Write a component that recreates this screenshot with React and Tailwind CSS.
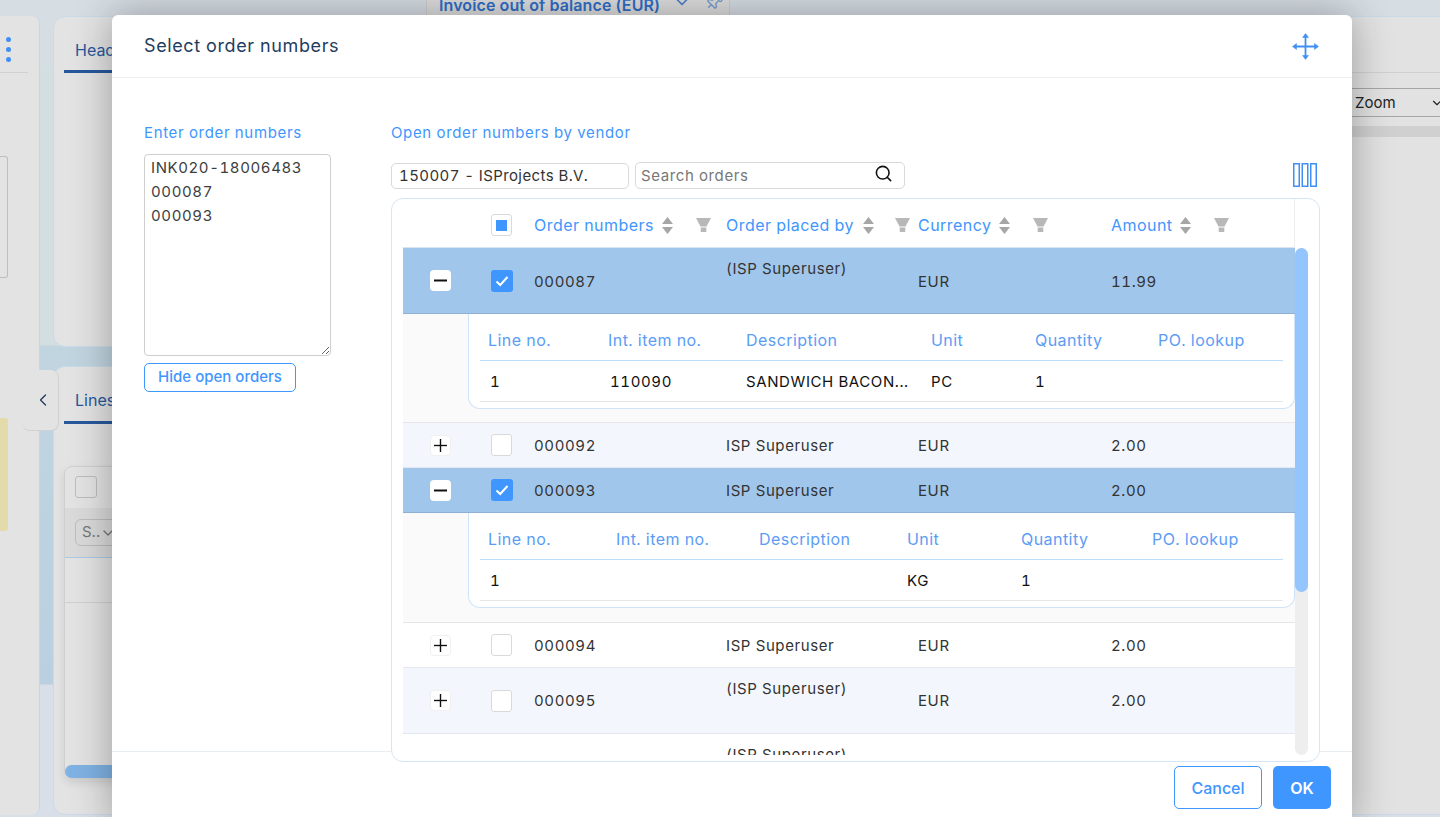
import { Search, ChevronDown, ChevronLeft, Pin } from "lucide-react";

const BLUE = "text-[#3f96fe]";

function Checkbox({ state }) {
    if (state === "checked") {
        return (
            <div className="w-[22px] h-[22px] rounded-[3px] bg-[#3f96fe] flex items-center justify-center">
                <svg width="14" height="12" viewBox="0 0 14 12" fill="none" stroke="white" strokeWidth="2">
                    <path d="M1.5 6.5 L5.2 10 L12.5 2" />
                </svg>
            </div>
        );
    }
    if (state === "partial") {
        return (
            <div className="w-[21px] h-[22px] rounded-[3px] bg-white border border-[#d9d9d9] flex items-center justify-center">
                <div className="w-[11px] h-[11px] bg-[#3f96fe]" />
            </div>
        );
    }
    return <div className="w-[21px] h-[22px] rounded-[3px] bg-white border border-[#d9d9d9]" />;
}

function ExpandButton({ open }) {
    return (
        <div className={`w-[21px] h-[21px] rounded-[4px] bg-white flex items-center justify-center ${open ? "" : "border border-[#f0f0f0]"}`}>
            <svg width="13" height="13" viewBox="0 0 13 13" stroke="#111" fill="none" strokeWidth={open ? 2 : 1.4}>
                <path d="M0 6.5 H13" />
                {!open && <path d="M6.5 0 V13" />}
            </svg>
        </div>
    );
}

function SortIcon() {
    return (
        <svg width="11" height="17" viewBox="0 0 11 17" fill="#a6a6a6" className="shrink-0">
            <path d="M5.5 0 L11 7 H0 Z" />
            <path d="M0 10 H11 L5.5 17 Z" />
        </svg>
    );
}

function FilterIcon() {
    return (
        <svg width="15" height="14" viewBox="0 0 15 14" fill="#b8b8b8" className="shrink-0">
            <path d="M0 0 H15 L10.5 8.5 H4.5 Z" />
            <rect x="4.7" y="9.5" width="5.6" height="4.5" />
        </svg>
    );
}

function HeaderCell({ label, width, sortGap = "ml-[8px]", gap }) {
    return (
        <div className={`flex items-center ${width}`}>
            <span className={`${BLUE} text-[16px] tracking-[0.45px] whitespace-nowrap`}>{label}</span>
            <span className={sortGap}><SortIcon /></span>
            <span className={gap}><FilterIcon /></span>
        </div>
    );
}

function OrderRow({ number, by, amount, height, bg, border, open, checked, topAligned, textPad = "pt-[2px]" }) {
    return (
        <div className={`flex items-center shrink-0 border-b ${height} ${bg} ${border}`}>
            <div className="w-[88px] pl-[27px]"><ExpandButton open={open} /></div>
            <div className="w-[43px]"><Checkbox state={checked ? "checked" : "none"} /></div>
            <div className={`w-[192px] text-[#333] ${textPad}`}>{number}</div>
            <div className={`w-[192px] text-[#333] ${topAligned ? "self-start pt-[10px]" : textPad}`}>{by}</div>
            <div className={`w-[193px] text-[#333] ${textPad}`}>EUR</div>
            <div className={`text-[#333] ${textPad}`}>{amount}</div>
        </div>
    );
}

function LineDetail({ height, widths, values }) {
    const labels = ["Line no.", "Int. item no.", "Description", "Unit", "Quantity", "PO. lookup"];
    return (
        <div className={`${height} shrink-0 bg-[#fafafa] border-b border-[#e6e6e6] pl-[65px]`}>
            <div className="h-[95px] bg-white border border-t-0 border-[#cfe4fa] rounded-b-xl px-[11px]">
                <div className="flex items-center h-[47px] pt-[5px] border-b border-[#bcdcfb]">
                    {labels.map((label, i) => (
                        <div key={label} className={`${widths[i]} pl-2 text-[16px] tracking-[0.45px] text-[#5c9cf5] whitespace-nowrap`}>{label}</div>
                    ))}
                </div>
                <div className="flex items-center h-[41px] pt-[3px] border-b border-[#e6e6e6]">
                    {values.map((value, i) => (
                        <div key={i} className={`${widths[i]} ${i < 2 ? "pl-[10px]" : "pl-2"} text-[#111] whitespace-nowrap`}>{value}</div>
                    ))}
                </div>
            </div>
        </div>
    );
}

function OrdersTable() {
    return (
        <div className="relative z-10 mt-[9px] h-[564px] w-[929px] bg-white border border-[#d5e6f6] rounded-xl pl-[11px] pr-[11px] pb-[6px] flex flex-col">
            <div className="flex items-center h-[49px] pt-[4px] shrink-0 w-[892px] border-b border-r border-b-[#d8e6f3] border-r-[#eeeeee]">
                <div className="w-[88px]" />
                <div className="w-[43px]"><Checkbox state="partial" /></div>
                <HeaderCell label="Order numbers" width="w-[192px]" gap="ml-[23px]" />
                <HeaderCell label="Order placed by" width="w-[192px]" sortGap="ml-[9px]" gap="ml-[21px]" />
                <HeaderCell label="Currency" width="w-[193px]" gap="ml-[23px]" />
                <HeaderCell label="Amount" width="" sortGap="ml-[7px]" gap="ml-[23px]" />
            </div>
            <div className="flex flex-1 min-h-0">
                <div className="w-[892px] overflow-hidden flex flex-col">
                    <OrderRow number="000087" by="(ISP Superuser)" amount="11.99" height="h-[66px]" bg="bg-[#a1c6eb]" border="border-[#8fb0d2]" open checked topAligned textPad="pt-[4px]" />
                    <LineDetail
                        height="h-[109px]"
                        widths={["w-[120px]", "w-[138px]", "w-[185px]", "w-[104px]", "w-[123px]", "w-[110px]"]}
                        values={["1", "110090", "SANDWICH BACON...", "PC", "1", ""]}
                    />
                    <OrderRow number="000092" by="ISP Superuser" amount="2.00" height="h-[45px]" bg="bg-[#f3f7fd]" border="border-[#e3e8ee]" />
                    <OrderRow number="000093" by="ISP Superuser" amount="2.00" height="h-[45px]" bg="bg-[#a1c6eb]" border="border-[#8fb0d2]" open checked />
                    <LineDetail
                        height="h-[110px]"
                        widths={["w-[128px]", "w-[143px]", "w-[148px]", "w-[114px]", "w-[131px]", "w-[110px]"]}
                        values={["1", "", "", "KG", "1", ""]}
                    />
                    <OrderRow number="000094" by="ISP Superuser" amount="2.00" height="h-[45px]" bg="bg-white" border="border-[#e3e8ee]" />
                    <OrderRow number="000095" by="(ISP Superuser)" amount="2.00" height="h-[66px]" bg="bg-[#f3f7fd]" border="border-[#e3e8ee]" topAligned />
                    <div className="pl-[323px] pt-[10px] text-[#333] whitespace-nowrap">(ISP Superuser)</div>
                </div>
                <div className="w-[13px] bg-[#eeeeee] rounded-full">
                    <div className="h-[344px] bg-[#94c5fd] rounded-full" />
                </div>
            </div>
        </div>
    );
}

function OrderModal() {
    return (
        <div className="absolute z-20 left-[112px] top-[15px] w-[1240px] h-[810px] bg-white rounded-t-md shadow-[0_0_40px_rgba(0,0,0,0.32)] font-[Inter,sans-serif] text-[15px] tracking-[0.6px] tabular-nums">
            <div className="h-[63px] border-b border-[#eceff2] flex items-center justify-between pl-[32px] pr-[33px]">
                <h2 className="text-[18px] font-normal text-[#1f3d5e] -mt-[2px]">Select order numbers</h2>
                <svg width="27" height="27" viewBox="0 0 27 27" fill="#3f8ff5" stroke="#3f8ff5">
                    <path d="M13.5 3 V24 M3 13.5 H24" fill="none" strokeWidth="1.8" />
                    <path d="M13.5 0.5 L16.5 4.5 H10.5 Z M13.5 26.5 L16.5 22.5 H10.5 Z M0.5 13.5 L4.5 10.5 V16.5 Z M26.5 13.5 L22.5 10.5 V16.5 Z" strokeWidth="0.5" />
                </svg>
            </div>

            <div className="h-[673px] flex pl-[32px] gap-[60px]">
                <div className="w-[187px] pt-[44px]">
                    <div className={`${BLUE} h-5 leading-[22px] tracking-[0.65px]`}>Enter order numbers</div>
                    <textarea
                        readOnly
                        defaultValue={"INK020-18006483\n000087\n000093"}
                        className="mt-[12px] block w-[187px] h-[202px] border border-[#cfcfcf] rounded-[4px] px-[6px] py-[1px] leading-6 text-[#3d3d3d] outline-none resize"
                    />
                    <button className={`mt-[7px] w-[152px] h-[29px] border border-[#3f96fe] rounded-[5px] text-[15px] font-medium tracking-normal ${BLUE}`}>
                        Hide open orders
                    </button>
                </div>

                <div className="w-[929px] pt-[44px]">
                    <div className={`${BLUE} h-5 leading-[22px] tracking-[0.65px]`}>Open order numbers by vendor</div>
                    <div className="mt-[20px] flex items-center">
                        <div className="w-[238px] h-[26px] pt-[1px] border border-[#d9d9d9] rounded-[5px] pl-[7px] flex items-center text-[#333] tracking-[0.4px]">150007 - ISProjects B.V.</div>
                        <div className="ml-[6px] w-[270px] h-[27px] border border-[#d9d9d9] rounded-[5px] px-[5px] flex items-center justify-between text-[#777]">
                            <span className="pt-[1px]">Search orders</span>
                            <Search size={19} color="#111" className="mr-[6px] mb-[4px]" />
                        </div>
                        <svg width="24" height="24" viewBox="0 0 24 24" fill="none" stroke="#3f8ff5" strokeWidth="1.5" className="ml-[388px] -mt-[1px]">
                            <rect x="0.75" y="0.75" width="5.5" height="22.5" />
                            <rect x="9.25" y="0.75" width="5.5" height="22.5" />
                            <rect x="17.75" y="0.75" width="5.5" height="22.5" />
                        </svg>
                    </div>
                    <OrdersTable />
                </div>
            </div>

            <div className="border-t border-[#e8edf1] pt-[14px] pr-[21px] flex justify-end gap-[11px]">
                <button className={`w-[88px] h-[43px] pt-[1px] border border-[#3f96fe] rounded-[5px] text-[16px] font-medium tracking-normal ${BLUE}`}>Cancel</button>
                <button className="w-[58px] h-[43px] pt-[1px] bg-[#3f96fe] rounded-[5px] text-[16px] font-semibold tracking-normal text-white">OK</button>
            </div>
        </div>
    );
}

function BackgroundPage() {
    return (
        <div className="h-full flex flex-col font-[Inter,sans-serif]">
            <div className="h-[16px] shrink-0 overflow-hidden pl-[426px]">
                <div className="w-[304px] h-[16px] bg-[#dedede] border-x border-[#cfcfcf] flex items-center pl-[12px] -mt-[1px]">
                    <span className="text-[16px] font-semibold tracking-[0.1px] text-[#2f6fc9] whitespace-nowrap -mt-[5px]">Invoice out of balance (EUR)</span>
                    <ChevronDown size={20} color="#4a7fc9" className="ml-[12px] -mt-[10px]" />
                    <Pin size={18} color="#7f9fd0" className="ml-[13px] -mt-[10px] rotate-45" />
                </div>
            </div>

            <div className="flex-1 min-h-0 flex pb-[2px]">
                {/* collapsed side panel */}
                <div className="relative w-[40px] bg-[#e3e3e3] rounded-r-lg border-r border-[#c6d6e2]">
                    <div className="h-[56px] flex flex-col items-start pl-[6px] pt-[21px] gap-[5px]">
                        <span className="w-[5px] h-[5px] rounded-full bg-[#3f8ff5]" />
                        <span className="w-[5px] h-[5px] rounded-full bg-[#3f8ff5]" />
                        <span className="w-[5px] h-[5px] rounded-full bg-[#3f8ff5]" />
                    </div>
                    <div className="w-[28px] border-t border-[#d0d0d0]" />
                    <div className="mt-[83px] w-[8px] h-[122px] border border-l-0 border-[#bdbdbd] rounded-r-[3px]" />
                    <div className="mt-[140px] w-[8px] h-[113px] bg-[#e3dcaa] rounded-r-[3px]" />
                    <div className="absolute z-10 left-[22px] top-[354px] w-[37px] h-[61px] bg-[#e3e3e3] border-r border-b border-[#d0d0d0] rounded-r-lg rounded-b-lg flex items-center justify-end pr-[5px]">
                        <ChevronLeft size={20} color="#1f3d5e" strokeWidth={1.6} />
                    </div>
                </div>

                {/* header + lines cards */}
                <div className="ml-[13px] w-[700px] flex flex-col gap-[19px]">
                    <div className="h-[331px] bg-[#e3e3e3] rounded-xl border border-[#c9dbe8] pt-[19px] px-[10px]">
                        <div className="h-[37px] border-b-[3px] border-[#27589c] pl-[11px] pt-[2px] text-[16px] text-[#27589c]">Header</div>
                    </div>
                    <div className="flex-1 bg-[#e3e3e3] rounded-xl border border-[#c9dbe8] pt-[19px] px-[10px]">
                        <div className="h-[38px] border-b-[3px] border-[#27589c] pl-[11px] pt-[2px] text-[16px] text-[#27589c]">Lines</div>
                        <div className="mt-[42px] h-[313px] border border-[#cfcfcf] rounded-lg shadow-[0_4px_8px_rgba(0,0,0,0.1)] flex flex-col">
                            <div className="h-[41px] pl-[10px] pt-[9px]">
                                <div className="w-[22px] h-[22px] border border-[#bdbdbd] rounded-[3px]" />
                            </div>
                            <div className="h-[50px] bg-[#dadada] border-b border-[#a9c9e8] pl-[10px] flex items-center">
                                <div className="w-[60px] h-[27px] border border-[#bdbdbd] rounded-md pl-[6px] flex items-center text-[15px] text-[#777]">S..
                                    <ChevronDown size={16} color="#777" />
                                </div>
                            </div>
                            <div className="h-[45px] border-b border-[#d0d0d0]" />
                            <div className="flex-1" />
                            <div className="h-[13px] bg-[#7fb2e4] rounded-full" />
                        </div>
                    </div>
                </div>

                {/* right panel */}
                <div className="ml-[14px] flex-1 bg-[#e2e2e2] border-y border-[#c9dbe8] overflow-hidden">
                    <div className="mt-[55px] border-t border-[#d0d0d0]" />
                    <div className="mt-[15px] ml-[580px] w-[97px] h-[29px] border-y border-[#a6a6a6] pl-[8px] flex items-center justify-between text-[15px] text-[#222]">
                        <span className="pt-[2px]">Zoom</span>
                        <ChevronDown size={14} color="#222" />
                    </div>
                    <div className="mt-[9px] h-[11px] bg-[#d0d0d0]" />
                </div>
            </div>
        </div>
    );
}

export default function App() {
    return (
        <div className="relative w-[1440px] h-[817px] overflow-hidden bg-[linear-gradient(180deg,#d6dde3_0px,#d6dde3_65px,#d3dee0_66px,#d3dee0_345px,#c1d5e0_346px,#bad0e0_684px,#d9dfe8_685px)]">
            <BackgroundPage />
            <OrderModal />
        </div>
    );
}
